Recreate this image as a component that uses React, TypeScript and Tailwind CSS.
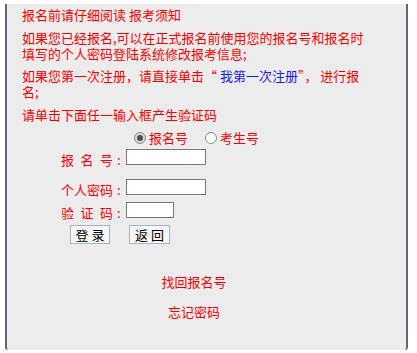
import { useState } from "react";

const font = {
  fontFamily: '"Noto Sans CJK SC", "Microsoft YaHei", sans-serif',
};

function Label({ chars }: { chars: string[] }) {
  return (
    <div className="flex translate-y-[2px] items-center text-[13px] leading-[15px] text-[#ff0000]">
      <span className="flex w-[52px] justify-between">
        {chars.map((c) => (
          <span key={c}>{c}</span>
        ))}
      </span>
      <span className="w-[13px] pl-[4px]">:</span>
    </div>
  );
}

function Radio({ checked, label, onClick }: { checked: boolean; label: string; onClick: () => void }) {
  return (
    <button type="button" onClick={onClick} className="flex items-center gap-[3px]">
      <span
        className={
          checked
            ? "flex h-[12px] w-[12px] items-center justify-center rounded-full border border-[#8a8a8a] bg-[#dcdcdc]"
            : "flex h-[12px] w-[12px] items-center justify-center rounded-full border border-[#8a8a8a] bg-white"
        }
      >
        {checked && <span className="h-[6px] w-[6px] rounded-full bg-[#4d4d4d]" />}
      </span>
      <span className="text-[13px] leading-[16px] text-[#ff0000]">{label}</span>
    </button>
  );
}

export default function App() {
  const [mode, setMode] = useState<"bmh" | "ksh">("bmh");

  return (
    <div className="h-[353px] w-[417px] bg-white" style={font}>
      <div className="mx-[5px] mt-[4px] h-[346px] w-[403px] rounded-b-[3px] border-x-2 border-[#5f6775] bg-[#ececec]">
        {/* notice */}
        <div className="pl-[15px] pt-[3px] text-[13px] leading-[16px] text-[#ff0000]">
          <p>报名前请仔细阅读 报考须知</p>
          <p className="mt-[7px]">
            如果您已经报名,可以在正式报名前使用您的报名号和报名时
            <br />
            填写的个人密码登陆系统修改报考信息;
          </p>
          <p className="mt-[6px]">
            如果您第一次注册，请直接单击“ <span className="text-[#1a1aff]">我第一次注册</span>”， 进行报
            <br />
            名;
          </p>
          <p className="mt-[7px]">请单击下面任一输入框产生验证码</p>
        </div>

        {/* login form */}
        <div className="mt-[7px] flex gap-[17px] pl-[127px]">
          <Radio checked={mode === "bmh"} label="报名号" onClick={() => setMode("bmh")} />
          <Radio checked={mode === "ksh"} label="考生号" onClick={() => setMode("ksh")} />
        </div>

        <div className="mt-[3px] flex items-end pl-[54px]">
          <Label chars={["报", "名", "号"]} />
          <input className="h-[16px] w-[80px] border border-[#7a7a7a] bg-white outline-none" />
        </div>
        <div className="mt-[14px] flex items-end pl-[54px]">
          <Label chars={["个", "人", "密", "码"]} />
          <input type="password" className="h-[16px] w-[80px] border border-[#7a7a7a] bg-white outline-none" />
        </div>
        <div className="mt-[7px] flex items-end pl-[54px]">
          <Label chars={["验", "证", "码"]} />
          <input className="h-[16px] w-[48px] border border-[#7a7a7a] bg-white outline-none" />
        </div>

        <div className="mt-[7px] flex gap-[19px] pl-[63px]">
          <button
            type="button"
            className="h-[19px] w-[40px] border border-[#9fb6cd] bg-[#f7f7f7] text-[13px] leading-[17px] text-black"
          >
            登 录
          </button>
          <button
            type="button"
            className="h-[19px] w-[41px] border border-[#9fb6cd] bg-[#f7f7f7] text-[13px] leading-[17px] text-black"
          >
            返 回
          </button>
        </div>

        {/* links */}
        <div className="mt-[30px] flex flex-col items-center gap-[14px] pr-[25px] text-[13px] leading-[16px] text-[#ff0000]">
          <a href="#" className="cursor-pointer">找回报名号</a>
          <a href="#" className="cursor-pointer">忘记密码</a>
        </div>
      </div>
    </div>
  );
}
